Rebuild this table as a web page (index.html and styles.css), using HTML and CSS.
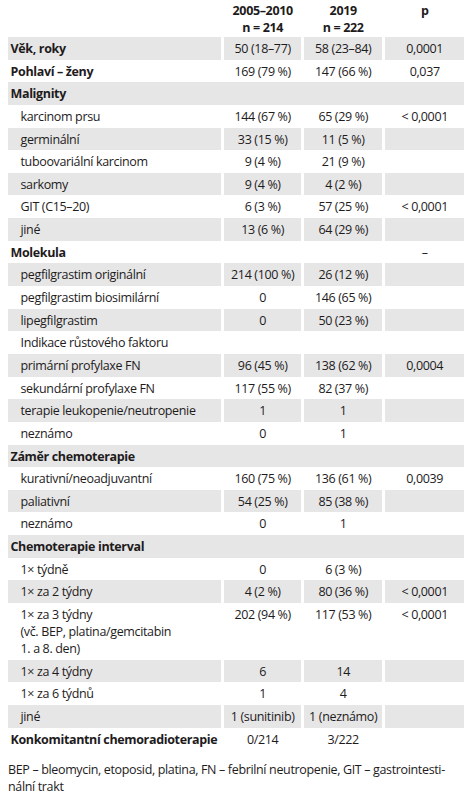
FILE: index.html
```html
<!DOCTYPE html>
<html lang="cs">
<head>
    <meta charset="UTF-8">
    <title>Charakteristika souboru</title>
    <link rel="stylesheet" href="styles.css">
</head>
<body>
    <table class="data">
        <colgroup>
            <col class="c-label">
            <col class="c-num">
            <col class="c-num">
            <col class="c-p">
        </colgroup>
        <thead>
            <tr>
                <th></th>
                <th>2005–2010<br>n = 214</th>
                <th>2019<br>n = 222</th>
                <th>p</th>
            </tr>
        </thead>
        <tbody>
            <tr class="shade"><td class="group">Věk, roky</td><td>50 (18–77)</td><td>58 (23–84)</td><td>0,0001</td></tr>
            <tr><td class="group">Pohlaví – ženy</td><td>169 (79 %)</td><td>147 (66 %)</td><td>0,037</td></tr>
            <tr class="shade"><td class="group" colspan="4">Malignity</td></tr>
            <tr><td class="sub">karcinom prsu</td><td>144 (67 %)</td><td>65 (29 %)</td><td>&lt; 0,0001</td></tr>
            <tr class="shade"><td class="sub">germinální</td><td>33 (15 %)</td><td>11 (5 %)</td><td></td></tr>
            <tr><td class="sub">tuboovariální karcinom</td><td>9 (4 %)</td><td>21 (9 %)</td><td></td></tr>
            <tr class="shade"><td class="sub">sarkomy</td><td>9 (4 %)</td><td>4 (2 %)</td><td></td></tr>
            <tr><td class="sub">GIT (C15–20)</td><td>6 (3 %)</td><td>57 (25 %)</td><td>&lt; 0,0001</td></tr>
            <tr class="shade"><td class="sub">jiné</td><td>13 (6 %)</td><td>64 (29 %)</td><td></td></tr>
            <tr><td class="group">Molekula</td><td></td><td></td><td>–</td></tr>
            <tr class="shade"><td class="sub">pegfilgrastim originální</td><td>214 (100 %)</td><td>26 (12 %)</td><td></td></tr>
            <tr><td class="sub">pegfilgrastim biosimilární</td><td>0</td><td>146 (65 %)</td><td></td></tr>
            <tr class="shade"><td class="sub">lipegfilgrastim</td><td>0</td><td>50 (23 %)</td><td></td></tr>
            <tr><td class="sub">Indikace růstového faktoru</td><td></td><td></td><td></td></tr>
            <tr class="shade"><td class="sub">primární profylaxe FN</td><td>96 (45 %)</td><td>138 (62 %)</td><td>0,0004</td></tr>
            <tr><td class="sub">sekundární profylaxe FN</td><td>117 (55 %)</td><td>82 (37 %)</td><td></td></tr>
            <tr class="shade"><td class="sub">terapie leukopenie/neutropenie</td><td>1</td><td>1</td><td></td></tr>
            <tr><td class="sub">neznámo</td><td>0</td><td>1</td><td></td></tr>
            <tr class="shade"><td class="group" colspan="4">Záměr chemoterapie</td></tr>
            <tr><td class="sub">kurativní/neoadjuvantní</td><td>160 (75 %)</td><td>136 (61 %)</td><td>0,0039</td></tr>
            <tr class="shade"><td class="sub">paliativní</td><td>54 (25 %)</td><td>85 (38 %)</td><td></td></tr>
            <tr><td class="sub">neznámo</td><td>0</td><td>1</td><td></td></tr>
            <tr class="shade"><td class="group" colspan="4">Chemoterapie interval</td></tr>
            <tr><td class="sub">1× týdně</td><td>0</td><td>6 (3 %)</td><td></td></tr>
            <tr class="shade"><td class="sub">1× za 2 týdny</td><td>4 (2 %)</td><td>80 (36 %)</td><td>&lt; 0,0001</td></tr>
            <tr><td class="sub">1× za 3 týdny<br>(vč. BEP, platina/gemcitabin<br>1. a 8. den)</td><td>202 (94 %)</td><td>117 (53 %)</td><td>&lt; 0,0001</td></tr>
            <tr class="shade"><td class="sub">1× za 4 týdny</td><td>6</td><td>14</td><td></td></tr>
            <tr><td class="sub">1× za 6 týdnů</td><td>1</td><td>4</td><td></td></tr>
            <tr class="shade"><td class="sub">jiné</td><td>1 (sunitinib)</td><td>1 (neznámo)</td><td></td></tr>
            <tr><td class="group">Konkomitantní chemoradioterapie</td><td>0/214</td><td>3/222</td><td></td></tr>
        </tbody>
    </table>

    <p class="note">BEP – bleomycin, etoposid, platina, FN – febrilní neutropenie, GIT – gastrointesti-<br>nální trakt</p>
</body>
</html>
```

FILE: styles.css
```css
body {
    margin: 0 7px 0 8px;
    background: #fff;
    color: #1e1b1c;
    font-family: 'Open Sans', 'Noto Sans', sans-serif;
    font-size: 12.5px;
    letter-spacing: -0.35px;
    line-height: 17px;
}

.data {
    table-layout: fixed;
    border-collapse: separate;
    border-spacing: 3.5px 0;
    margin: 0 -3.5px;
    width: 463px;
}

.c-label { width: 212px; }
.c-num { width: 77px; }
.c-p { width: 79px; }

.data th {
    font-weight: 700;
    text-align: center;
    padding: 1.5px 3px 1.5px;
    vertical-align: top;
}

.data td {
    padding: 3px 3px 2.65px;
    text-align: center;
    vertical-align: top;
}

.data td.group,
.data td.sub {
    text-align: left;
}

.data td.group {
    font-weight: 700;
}

.data td.sub {
    padding-left: 13px;
}

.shade td {
    background: #e6e6e6;
}

.note {
    margin: 11px 0 0;
}
```
